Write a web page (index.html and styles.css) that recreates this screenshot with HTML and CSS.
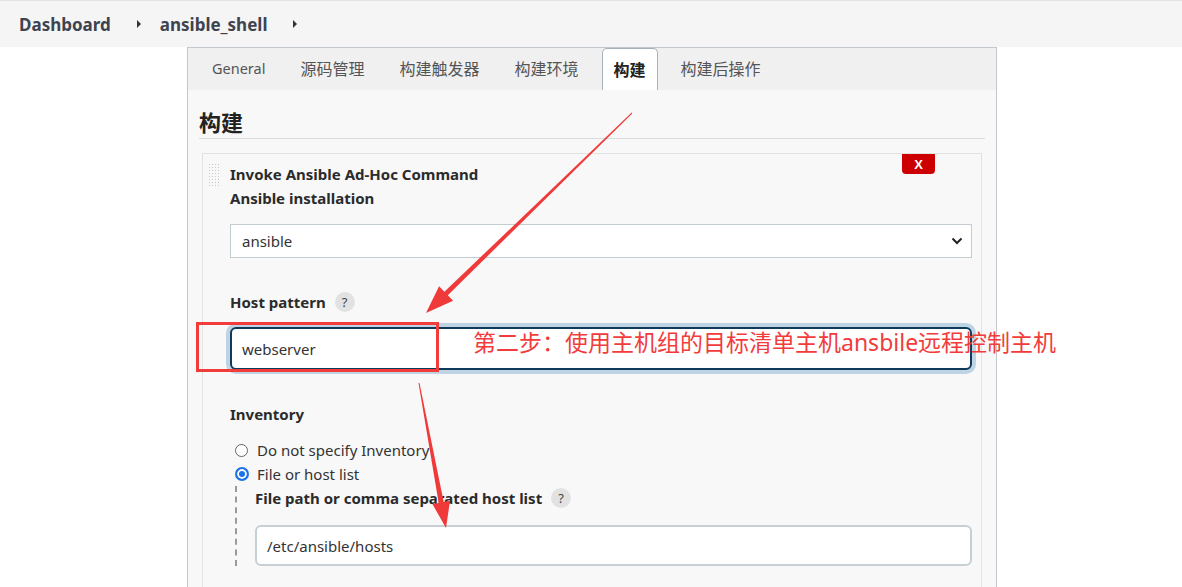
FILE: index.html
```html
<!DOCTYPE html>
<html lang="zh-CN">
<head>
<meta charset="utf-8">
<title>ansible_shell Config</title>
<link rel="stylesheet" href="styles.css">
</head>
<body>
<header class="crumbs">
  <span class="crumb">Dashboard</span><span class="caret"></span>
  <span class="crumb">ansible_shell</span><span class="caret"></span>
</header>
<main class="panel">
  <nav class="tabs">
    <span class="tab latin">General</span>
    <span class="tab">源码管理</span>
    <span class="tab">构建触发器</span>
    <span class="tab">构建环境</span>
    <span class="tab active">构建</span>
    <span class="tab">构建后操作</span>
  </nav>
  <section class="content">
    <h2 class="heading">构建</h2>
    <div class="step">
      <div class="handle"></div>
      <button class="del">X</button>
      <div class="step-body">
        <div class="title">Invoke Ansible Ad-Hoc Command</div>
        <div class="label">Ansible installation</div>
        <div class="select"><span>ansible</span>
          <svg class="chev" width="12" height="8" viewBox="0 0 12 8"><path d="M1.5 1.5 L6 6 L10.5 1.5" fill="none" stroke="#222" stroke-width="2"/></svg>
        </div>
        <div class="label gap-l">Host pattern <span class="help">?</span></div>
        <div class="input focus">webserver</div>
        <div class="label gap-l">Inventory</div>
        <div class="radio first"><span class="dot"></span>Do not specify Inventory</div>
        <div class="radio"><span class="dot on"></span>File or host list</div>
        <div class="nested">
          <div class="label">File path or comma separated host list <span class="help">?</span></div>
          <div class="input plain">/etc/ansible/hosts</div>
        </div>
      </div>
    </div>
  </section>
</main>
<div class="mark-box"></div>
<div class="mark-text">第二步：使用主机组的目标清单主机ansbile远程控制主机</div>
<svg class="arrows" width="1182" height="587" viewBox="0 0 1182 587">
  <polygon fill="#f03a3a" points="632.3,113.4 447.8,295.3 453.1,300.7 426,313 439.1,286.3 444.4,291.7 631.7,112.6"/>
  <polygon fill="#f03a3a" points="419.5,382.9 443.7,501.9 450.0,500.8 446,528 432.4,504.0 438.7,502.9 418.5,383.1"/>
</svg>
</body>
</html>
```
FILE: styles.css
```css
* { box-sizing: border-box; }
html, body { margin: 0; padding: 0; }
body {
  background: #fff;
  font-family: "Noto Sans", "Noto Sans CJK SC", sans-serif;
  color: #333;
  width: 1182px;
  height: 587px;
  overflow: hidden;
  position: relative;
}
.crumbs {
  height: 47px;
  background: #f5f5f5;
  border-top: 1px solid #e2e2e2;
  display: flex;
  align-items: center;
  padding-left: 19px;
}
.crumb {
  font-size: 17px;
  font-weight: 700;
  color: #3d4450;
}
.caret {
  width: 0; height: 0;
  border-left: 4px solid #333;
  border-top: 4px solid transparent;
  border-bottom: 4px solid transparent;
  margin: 0 19px 0 26px;
}
.panel {
  margin-left: 187px;
  width: 810px;
  height: 540px;
  border: 1px solid #c2c8cd;
  border-bottom: none;
  background: #f8f8f8;
  display: flex;
  flex-direction: column;
  overflow: hidden;
}
.tabs {
  height: 42px;
  flex: none;
  background: #f0f0f0;
  display: flex;
  gap: 11px;
  padding-left: 12px;
  align-items: stretch;
}
.tab {
  font-size: 16px;
  color: #555;
  padding: 0 12px 3px;
  display: flex;
  align-items: center;
}
.tab.latin { font-size: 14.5px; }
.tab.active {
  background: #fff;
  border: 1px solid #a9b1b8;
  border-bottom: none;
  border-radius: 5px 5px 0 0;
  color: #222;
  font-weight: 700;
  padding: 0 11px 2px;
}
.content {
  flex: 1;
  min-height: 0;
  padding: 0 11px;
  display: flex;
  flex-direction: column;
}
.heading {
  margin: 0;
  font-size: 22px;
  font-weight: 700;
  line-height: 30px;
  padding-top: 17px;
  padding-bottom: 1px;
  border-bottom: 1px solid #dcdcdc;
  color: #222;
  flex: none;
}
.step {
  flex: 1;
  margin: 14px 3px 0 3px;
  border: 1px solid #e2e2e2;
  border-bottom: none;
  position: relative;
  display: flex;
}
.handle {
  width: 13px;
  height: 23px;
  margin: 9px 0 0 5px;
  background-image: radial-gradient(circle, #c8c8c8 0.8px, transparent 1px);
  background-size: 3px 3px;
}
.del {
  position: absolute;
  top: 0;
  right: 46px;
  width: 33px;
  height: 20px;
  background: #cc0000;
  color: #fff;
  border: none;
  border-radius: 0 0 4px 4px;
  font-family: "Liberation Sans", sans-serif;
  font-weight: 700;
  font-size: 13px;
  padding: 0;
}
.step-body {
  flex: 1;
  padding: 8px 9px 0 9px;
}
.title, .label {
  font-size: 15px;
  font-weight: 700;
  line-height: 24px;
  color: #2b2b2b;
  display: flex;
  align-items: center;
}
.gap-l { margin-top: 32px; }
.select {
  margin-top: 14px;
  height: 34px;
  background: #fff;
  border: 1px solid #c3ccd1;
  display: flex;
  align-items: center;
  justify-content: space-between;
  padding: 0 8px 0 11px;
  font-size: 15px;
  color: #333;
}
.help {
  display: inline-flex;
  align-items: center;
  justify-content: center;
  width: 20px;
  height: 20px;
  border-radius: 50%;
  background: #e2e2e2;
  color: #444;
  font-size: 13px;
  font-weight: 400;
  margin-left: 9px;
}
.input {
  background: #fff;
  font-size: 15px;
  color: #333;
  display: flex;
  align-items: center;
  padding-left: 10px;
}
.input.focus {
  margin-top: 13px;
  height: 43px;
  border: 2px solid #0e3a5c;
  border-radius: 6px;
  box-shadow: 0 0 0 4px #bfd4e3;
}
.input.plain {
  margin-top: 15px;
  height: 41px;
  border: 2px solid #c6cfd4;
  border-radius: 6px;
}
.radio {
  display: flex;
  align-items: center;
  height: 24px;
  font-size: 15px;
  color: #333;
  padding-left: 5px;
}
.radio.first { margin-top: 12px; }
.dot {
  width: 13px;
  height: 13px;
  border-radius: 50%;
  border: 1px solid #666;
  background: #fff;
  margin-right: 9px;
  flex: none;
}
.dot.on {
  width: 14px;
  height: 14px;
  border: 2px solid #1a73e8;
  box-shadow: inset 0 0 0 2px #fff;
  background: #1a73e8;
  margin-right: 8px;
}
.nested {
  margin-left: 5px;
  border-left: 2px dashed #9a9a9a;
  padding-left: 18px;
  height: 80px;
}
.mark-box {
  position: absolute;
  left: 196px;
  top: 322px;
  width: 243px;
  height: 50px;
  border: 3px solid #f23c3c;
}
.mark-text {
  position: absolute;
  left: 473px;
  top: 327px;
  font-size: 23px;
  line-height: 30px;
  color: #f23c3c;
  white-space: nowrap;
}
.arrows {
  position: absolute;
  left: 0;
  top: 0;
  pointer-events: none;
}
```
